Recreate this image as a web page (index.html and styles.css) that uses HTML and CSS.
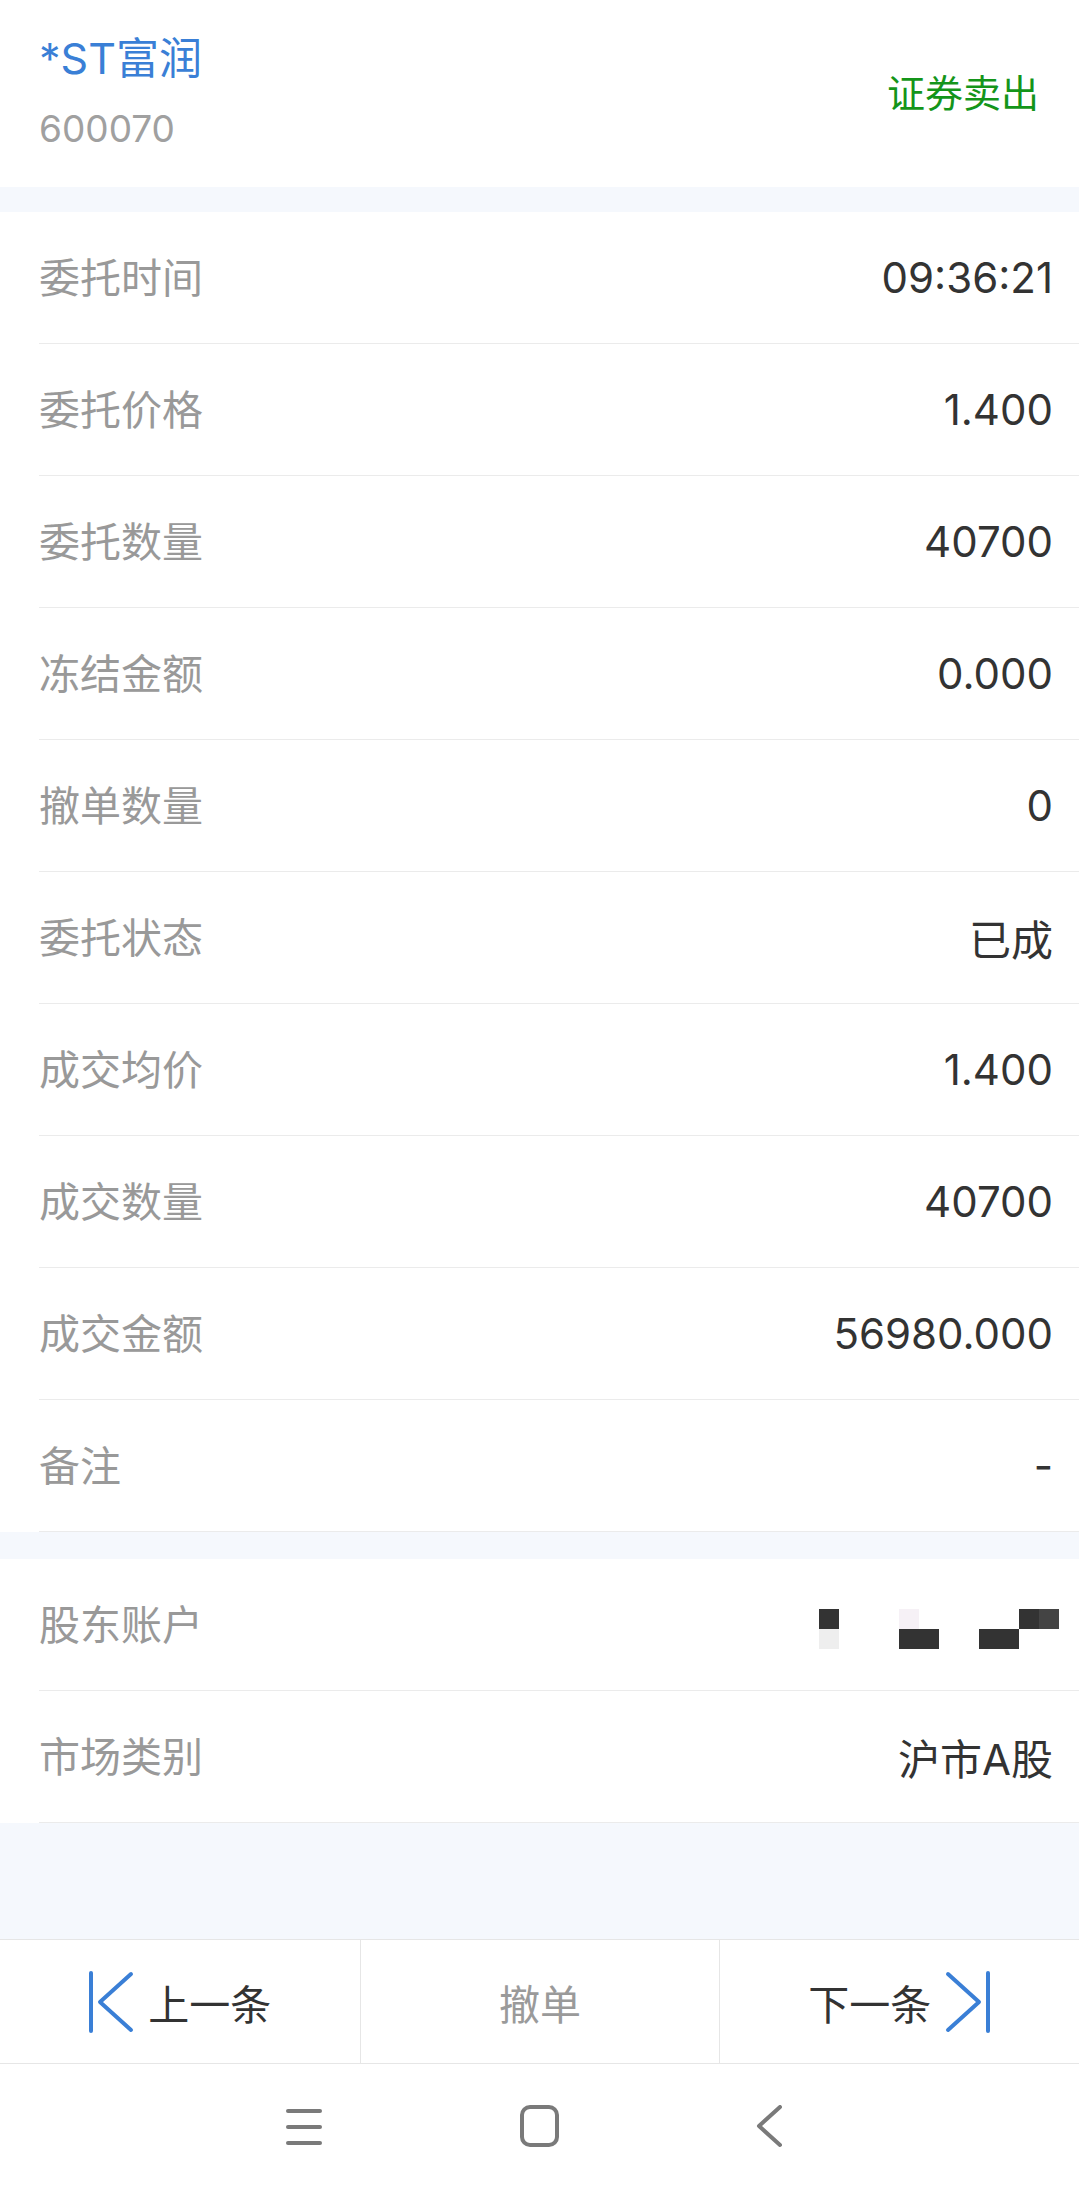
FILE: index.html
```html
<!DOCTYPE html>
<html lang="zh-CN">
<head>
<meta charset="UTF-8">
<meta name="viewport" content="width=device-width, initial-scale=1.0">
<title>委托详情</title>
<link rel="stylesheet" href="styles.css">
</head>
<body>

<div class="header">
    <div class="stock">
        <div class="stock-name">*ST富润</div>
        <div class="stock-code">600070</div>
    </div>
    <div class="trade-type">证券卖出</div>
</div>

<div class="group">
    <div class="row"><span class="label">委托时间</span><span class="value">09:36:21</span></div>
    <div class="row"><span class="label">委托价格</span><span class="value">1.400</span></div>
    <div class="row"><span class="label">委托数量</span><span class="value">40700</span></div>
    <div class="row"><span class="label">冻结金额</span><span class="value">0.000</span></div>
    <div class="row"><span class="label">撤单数量</span><span class="value">0</span></div>
    <div class="row"><span class="label">委托状态</span><span class="value">已成</span></div>
    <div class="row"><span class="label">成交均价</span><span class="value">1.400</span></div>
    <div class="row"><span class="label">成交数量</span><span class="value">40700</span></div>
    <div class="row"><span class="label">成交金额</span><span class="value">56980.000</span></div>
    <div class="row"><span class="label">备注</span><span class="value">-</span></div>
</div>

<div class="group group-second">
    <div class="row">
        <span class="label">股东账户</span>
        <!-- 打码的账户号 -->
        <span class="mosaic">
            <i class="px dark"></i><i></i><i></i><i></i><i class="px faint"></i><i></i><i></i><i></i><i></i><i></i><i class="px dark"></i><i class="px mid"></i>
            <i class="px light"></i><i></i><i></i><i></i><i class="px dark"></i><i class="px dark"></i><i></i><i></i><i class="px dark"></i><i class="px dark"></i><i></i><i></i>
        </span>
    </div>
    <div class="row"><span class="label">市场类别</span><span class="value">沪市A股</span></div>
</div>

<div class="spacer"></div>

<div class="actions">
    <div class="action">
        <svg class="arrow" width="46" height="62" viewBox="0 0 46 62">
            <line x1="3" y1="2" x2="3" y2="60" />
            <polyline points="43,3 12,31 43,59" />
        </svg>
        <span class="action-text">上一条</span>
    </div>
    <div class="action">
        <span class="action-text disabled">撤单</span>
    </div>
    <div class="action">
        <span class="action-text">下一条</span>
        <svg class="arrow arrow-next" width="46" height="62" viewBox="0 0 46 62">
            <line x1="43" y1="2" x2="43" y2="60" />
            <polyline points="3,3 34,31 3,59" />
        </svg>
    </div>
</div>

<div class="navbar">
    <div class="nav-btn">
        <svg width="40" height="44" viewBox="0 0 40 44">
            <line x1="4" y1="6" x2="36" y2="6" />
            <line x1="4" y1="22" x2="36" y2="22" />
            <line x1="4" y1="38" x2="36" y2="38" />
        </svg>
    </div>
    <div class="nav-btn">
        <svg width="42" height="44" viewBox="0 0 42 44">
            <rect x="3" y="2" width="35" height="38" rx="8" />
        </svg>
    </div>
    <div class="nav-btn">
        <svg width="40" height="44" viewBox="0 0 40 44">
            <polyline points="24,2 3,21 24,40" />
        </svg>
    </div>
</div>

</body>
</html>
```

FILE: styles.css
```css
body {
    margin: 0;
    padding: 0;
    background-color: #f5f8fd;
    font-family: Inter, "Noto Sans CJK SC", sans-serif;
    font-feature-settings: "pnum" 1;
    color: #333333;
}

.header {
    height: 187px;
    box-sizing: border-box;
    padding: 33px 40px 0 39px;
    background-color: #ffffff;
    display: flex;
    justify-content: space-between;
    align-items: flex-start;
}

.stock-name {
    font-size: 43px;
    line-height: 50px;
    color: #3a7fd6;
}

.stock-code {
    margin-top: 24px;
    font-size: 37px;
    line-height: 44px;
    color: #a0a0a0;
}

.trade-type {
    margin-top: 38px;
    font-size: 38px;
    line-height: 44px;
    color: #14951a;
}

.group {
    margin-top: 25px;
    background-color: #ffffff;
}

.group-second {
    margin-top: 27px;
}

.row {
    height: 132px;
    box-sizing: border-box;
    margin-left: 39px;
    padding-right: 26px;
    padding-bottom: 6px;
    border-bottom: 1px solid #ebebeb;
    display: flex;
    justify-content: space-between;
    align-items: center;
}

.label {
    font-size: 41px;
    color: #999999;
}

.value {
    padding-top: 6px;
    font-size: 42px;
    color: #333333;
}

/* 账户打码 */
.mosaic {
    display: grid;
    grid-template-columns: repeat(12, 20px);
    grid-template-rows: 20px 20px;
    margin-right: -6px;
    margin-top: 14px;
}

.mosaic i {
    display: block;
}

.mosaic .dark {
    background-color: #333333;
}

.mosaic .mid {
    background-color: #444444;
}

.mosaic .light {
    background-color: #eeeeee;
}

.mosaic .faint {
    background-color: #f6f1f6;
}

.spacer {
    height: 116px;
}

.actions {
    height: 123px;
    background-color: #ffffff;
    border-top: 1px solid #e6e6e6;
    border-bottom: 1px solid #e6e6e6;
    display: grid;
    grid-template-columns: 1fr 1fr 1fr;
}

.action {
    display: flex;
    justify-content: center;
    align-items: center;
    gap: 14px;
    border-left: 1px solid #e6e6e6;
}

.action:first-child {
    border-left: none;
}

.action-text {
    font-size: 41px;
    color: #333333;
}

.action-text.disabled {
    color: #9a9a9a;
}

.arrow line,
.arrow polyline {
    fill: none;
    stroke: #3a7fd6;
    stroke-width: 4;
    stroke-linecap: round;
    stroke-linejoin: round;
}

.navbar {
    height: 125px;
    background-color: #ffffff;
    display: flex;
    justify-content: center;
    align-items: center;
}

.nav-btn {
    width: 236px;
    display: flex;
    justify-content: center;
    align-items: center;
}

.nav-btn svg line,
.nav-btn svg rect,
.nav-btn svg polyline {
    fill: none;
    stroke: #7a7a7a;
    stroke-width: 4;
    stroke-linecap: round;
    stroke-linejoin: round;
}
```
